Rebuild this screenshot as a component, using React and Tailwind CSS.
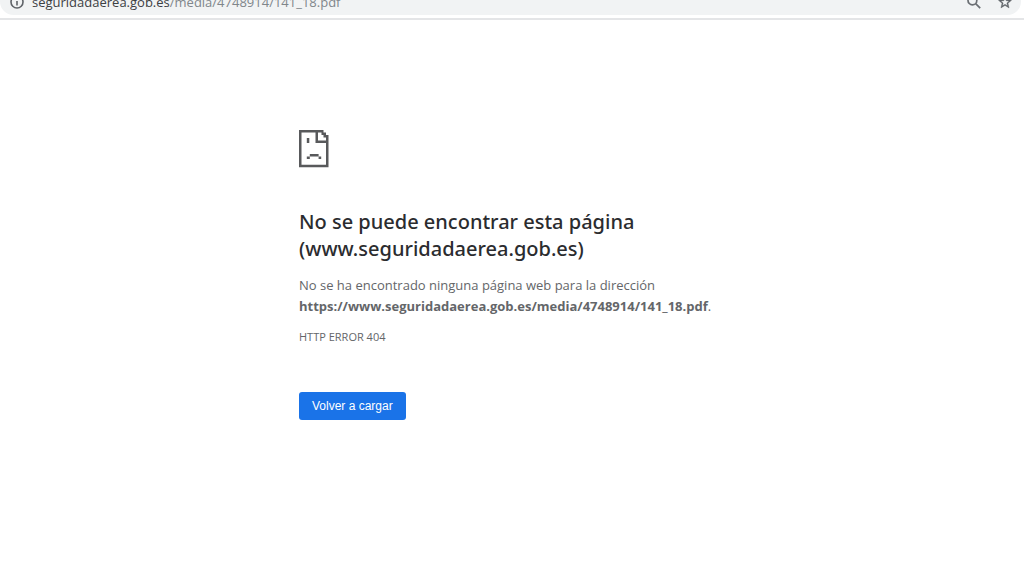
import React from "react";

function InfoIcon() {
  return (
    <svg viewBox="0 0 14 14" className="size-3.5" fill="none" stroke="#5f6368" strokeWidth="1.6" aria-hidden="true">
      <circle cx="7" cy="7" r="6" />
      <path d="M7 6v4.5M7 3.4v1.6" />
    </svg>
  );
}

function ZoomIcon() {
  return (
    <svg viewBox="0 0 14 14" className="size-3.5" fill="none" stroke="#6a6e73" strokeWidth="1.7" aria-hidden="true">
      <circle cx="5.4" cy="5.4" r="4.4" />
      <path d="M8.6 8.6l4.6 4.6" />
    </svg>
  );
}

function StarIcon() {
  return (
    <svg viewBox="0 0 24 24" className="size-4" fill="#5f6368" stroke="#5f6368" strokeWidth="0.5" aria-hidden="true">
      <path d="M22 9.24l-7.19-.62L12 2 9.19 8.63 2 9.24l5.46 4.73L5.82 21 12 17.27 18.18 21l-1.63-7.03L22 9.24zM12 15.4l-3.76 2.27 1-4.28-3.32-2.88 4.38-.38L12 6.1l1.71 4.04 4.38.38-3.32 2.88 1 4.28L12 15.4z" />
    </svg>
  );
}

function SadPage() {
  return (
    <svg viewBox="0 0 30 38" className="block h-[38px] w-[30px]" fill="#58595b" aria-hidden="true">
      <path
        d="M0 0H24.5V2.5H27V5H29.5V37.3H0ZM2.5 2.5V34.8H27V13H16.5V2.5ZM19 2.5V10.5H27V7.5H24.5V5H22.5V2.5Z"
        fillRule="evenodd"
      />
      <path d="M7.8 8h2.5v5H7.8zM10.8 24h8.8v2.5h-8.8zM7.8 26.5h3v2.5h-3zM19.6 26.5h2.6v2.5h-2.6z" />
    </svg>
  );
}

export default function App() {
  return (
    <div className="min-h-screen bg-white font-['Open_Sans','Noto_Sans',sans-serif] text-[#646669]">
      <header className="h-5 overflow-hidden border-b-2 border-[#e4e5e7]">
        <div className="-mt-3 mr-[3px] flex h-[27px] items-center rounded-full bg-[#f1f3f4] pr-2 pl-2.5">
          <InfoIcon />
          <p className="ml-2 grow text-[13px] leading-5 text-[#80868b]">
            <span className="text-[#3c4043]">seguridadaerea.gob.es</span>/media/4748914/141_18.pdf
          </p>
          <button type="button" aria-label="Zoom" className="mr-4"><ZoomIcon /></button>
          <button type="button" aria-label="Favoritos"><StarIcon /></button>
        </div>
      </header>
      <main className="mx-auto w-full max-w-[426px] pt-[110px]">
        <SadPage />
        <h1 className="mt-10 font-['Noto_Sans','Open_Sans',sans-serif] text-[20px] leading-[27px] font-medium text-[#2b2c2f]">
          No se puede encontrar esta página (www.seguridadaerea.gob.es)
        </h1>
        <p className="mt-[13px] text-[13px] leading-[21px]">
          No se ha encontrado ninguna página web para la dirección{" "}
          <strong className="font-bold">https://www.seguridadaerea.gob.es/media/4748914/141_18.pdf</strong>.
        </p>
        <p className="mt-3 text-[11px] leading-4">HTTP ERROR 404</p>
        <button type="button" className="mt-[47px] h-7 rounded-[3px] bg-[#1a73e8] px-[13px] font-['Liberation_Sans',Arial,sans-serif] text-[12px] text-white">
          Volver a cargar
        </button>
      </main>
    </div>
  );
}
